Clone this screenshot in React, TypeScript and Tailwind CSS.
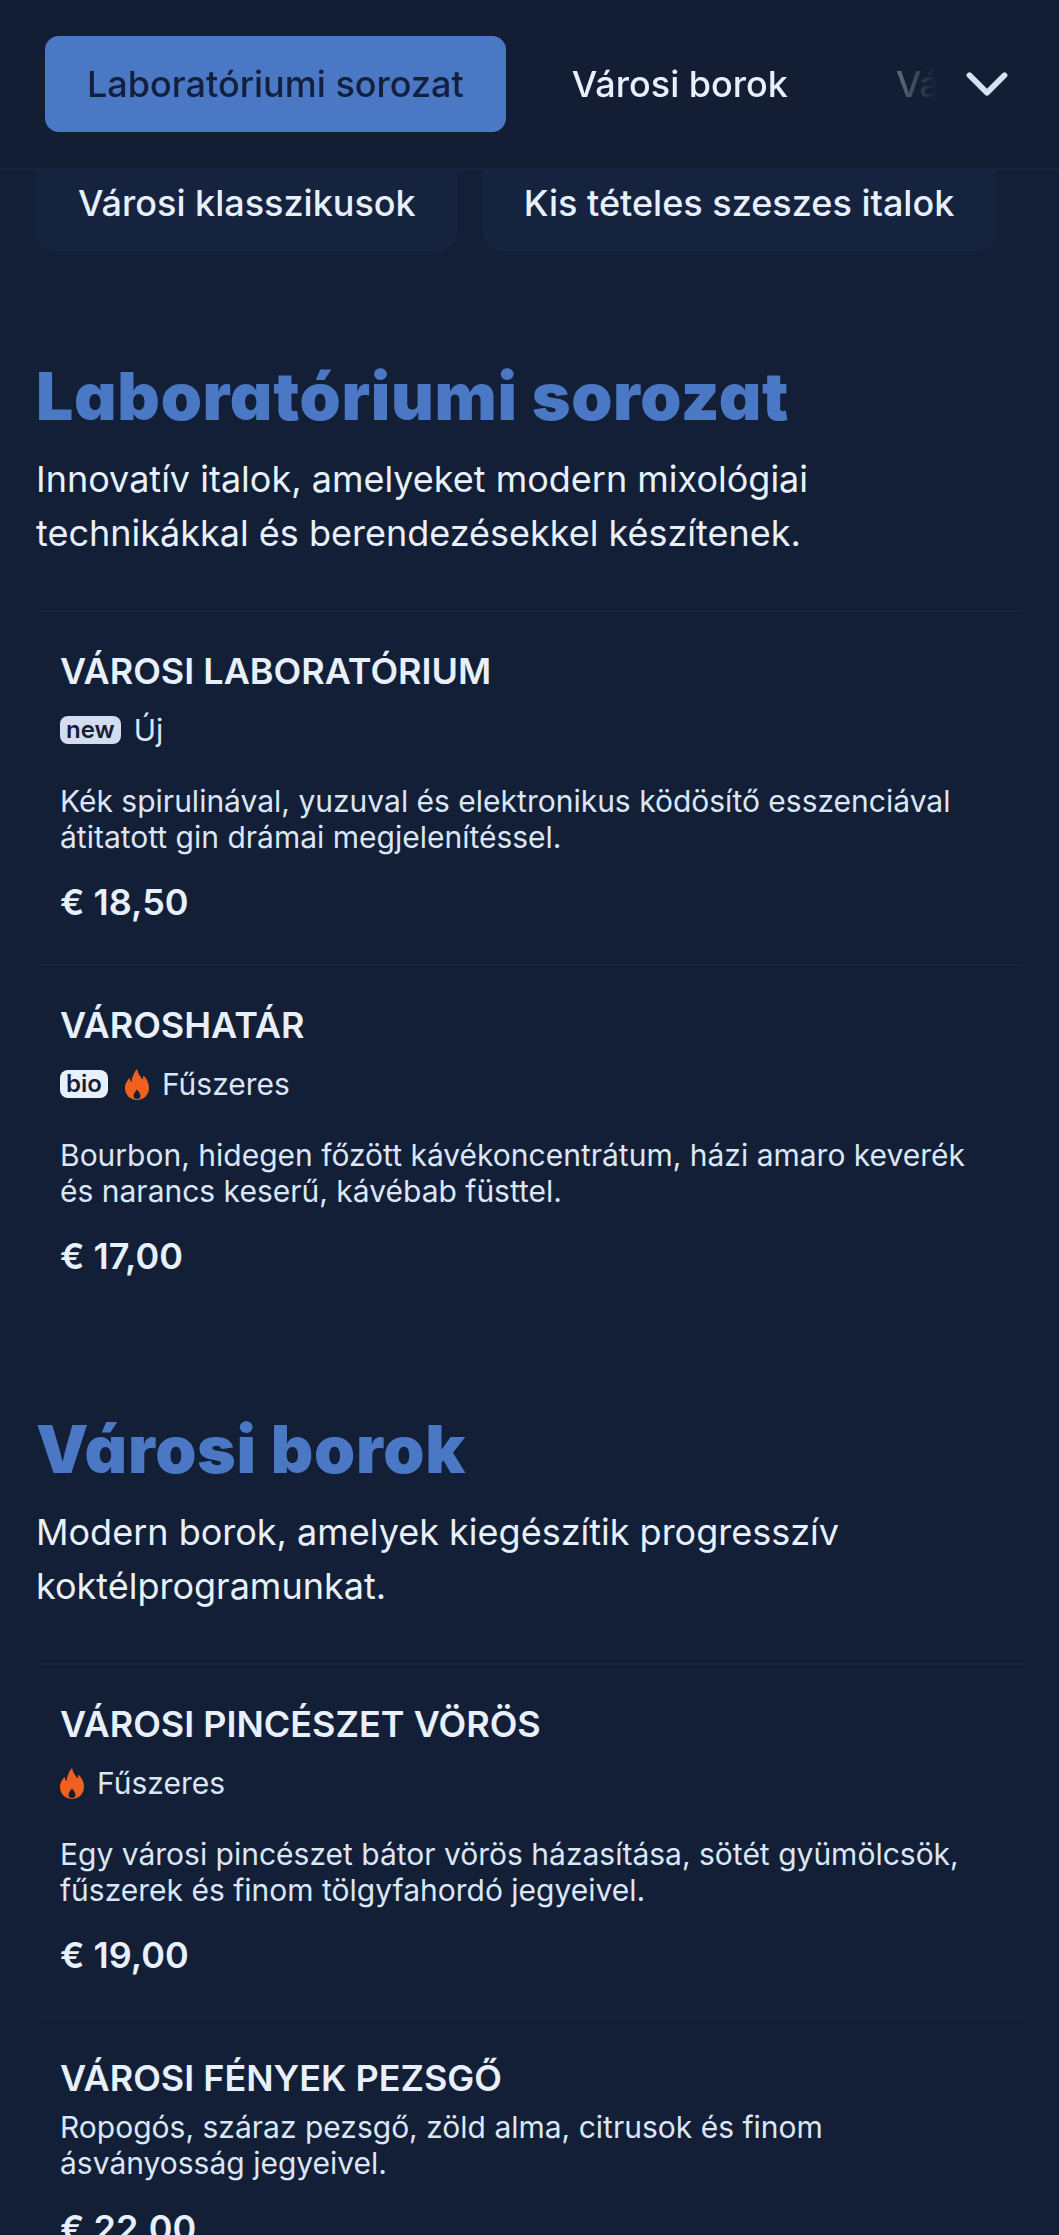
import React from 'react';
import { ChevronDown } from 'lucide-react';

type Item = {
  name: string;
  badge?: 'new' | 'bio';
  spicy?: boolean;
  label?: string;
  desc: string[];
  price: string;
};

const sections: { title: string; lead: string[]; items: Item[] }[] = [
  {
    title: 'Laboratóriumi sorozat',
    lead: ['Innovatív italok, amelyeket modern mixológiai', 'technikákkal és berendezésekkel készítenek.'],
    items: [
      {
        name: 'VÁROSI LABORATÓRIUM',
        badge: 'new',
        label: 'Új',
        desc: ['Kék spirulinával, yuzuval és elektronikus ködösítő esszenciával', 'átitatott gin drámai megjelenítéssel.'],
        price: '€ 18,50',
      },
      {
        name: 'VÁROSHATÁR',
        badge: 'bio',
        spicy: true,
        label: 'Fűszeres',
        desc: ['Bourbon, hidegen főzött kávékoncentrátum, házi amaro keverék', 'és narancs keserű, kávébab füsttel.'],
        price: '€ 17,00',
      },
    ],
  },
  {
    title: 'Városi borok',
    lead: ['Modern borok, amelyek kiegészítik progresszív', 'koktélprogramunkat.'],
    items: [
      {
        name: 'VÁROSI PINCÉSZET VÖRÖS',
        spicy: true,
        label: 'Fűszeres',
        desc: ['Egy városi pincészet bátor vörös házasítása, sötét gyümölcsök,', 'fűszerek és finom tölgyfahordó jegyeivel.'],
        price: '€ 19,00',
      },
      {
        name: 'VÁROSI FÉNYEK PEZSGŐ',
        desc: ['Ropogós, száraz pezsgő, zöld alma, citrusok és finom', 'ásványosság jegyeivel.'],
        price: '€ 22,00',
      },
    ],
  },
];

const Flame = ({ className }: { className?: string }) => (
  <svg viewBox="0 0 24 31" className={`h-[31px] w-6 shrink-0 ${className ?? ''}`} fill="#f0601e" fillRule="evenodd">
    <path d="M12 0C13 5 16 8 17.5 10.5C18 9 18.5 7.5 18.5 6.5C22 10 24 14 24 19C24 26 18.5 31 12 31C5.5 31 0 26 0 19C0 15 2 11.5 4.5 9C5 11 5.5 12 6.5 13C7 8 9 3.5 12 0ZM12 20.5C10 23 8.5 25 8.5 27C8.5 29 10 30 12 30C14 30 15.5 29 15.5 27C15.5 25 14 23 12 20.5Z" />
  </svg>
);

const MenuItem = ({ item }: { item: Item }) => {
  const hasTags = item.badge || item.label;
  return (
    <div className="border-t-2 border-[#18243d] px-6 pt-[37px] pb-10">
      <h3 className="text-[36px] leading-[44px] font-semibold text-[#e8f0fc]">{item.name}</h3>
      {hasTags && (
        <div className="mt-[17px] mb-[33px] flex h-10 items-center gap-[13px] text-[30px] text-[#dbe6f7]">
          {item.badge && (
            <span
              className={`flex h-[28px] items-center rounded-[8px] px-[6px] text-[24px] leading-none font-semibold text-[#131f36] ${
                item.badge === 'new' ? 'bg-[#d3dded]' : 'bg-[#e8f0fc]'
              }`}
            >
              {item.badge}
            </span>
          )}
          {item.spicy && <Flame className={item.badge ? 'ml-1' : ''} />}
          {item.label && <span>{item.label}</span>}
        </div>
      )}
      <p className={`text-[30px] leading-[36px] text-[#dbe6f7] ${hasTags ? '' : 'mt-[9px]'}`}>
        {item.desc.map((line) => (
          <span key={line} className="block whitespace-nowrap">
            {line}
          </span>
        ))}
      </p>
      <div className="mt-[25px] text-[36px] leading-[44px] font-semibold text-[#e8f0fc]">{item.price}</div>
    </div>
  );
};

export default function App() {
  return (
    <div className="h-[2235px] overflow-hidden bg-[#131f36] font-['Inter',sans-serif]">
      {/* sticky category bar */}
      <header className="sticky top-0 z-10 flex h-[170px] items-center border-b-2 border-[#18243d] bg-[#131e35] pr-[37px] pl-[45px]">
        <div className="flex flex-1 gap-6 overflow-hidden text-[36px] font-medium text-[#e8f0fc] [mask-image:linear-gradient(to_right,black_88%,transparent_100%)]">
          <button className="h-24 shrink-0 rounded-[14px] bg-[#4a78c4] px-[42px] text-[#131f3c]">Laboratóriumi sorozat</button>
          <button className="h-24 shrink-0 px-[42px]">Városi borok</button>
          <button className="h-24 shrink-0 px-[42px]">Városi klasszikusok</button>
        </div>
        <ChevronDown className="ml-[15px] text-[#d5e1f5]" size={70} strokeWidth={2} />
      </header>

      <div className="mt-[-15px] flex gap-6 px-9 text-[36px] font-medium text-[#e8f0fc]">
        <div className="flex h-24 items-center rounded-[20px] bg-[#16233f] px-[42px]">Városi klasszikusok</div>
        <div className="flex h-24 items-center rounded-[20px] bg-[#16233f] px-[42px]">Kis tételes szeszes italok</div>
      </div>

      <main className="px-9">
        {sections.map((s, i) => (
          <section key={s.title} className={i === 0 ? 'mt-[105px]' : 'mt-[91px]'}>
            <h2 className="text-[66px] leading-[80px] font-black tracking-[0.7px] text-[#4a78c4] [font-feature-settings:'cv11']">{s.title}</h2>
            <p className="mt-4 mb-[50px] text-[36px] leading-[54px] text-[#e8f0fc]">
              {s.lead.map((line) => (
                <span key={line} className="block whitespace-nowrap">
                  {line}
                </span>
              ))}
            </p>
            {s.items.map((item) => (
              <MenuItem key={item.name} item={item} />
            ))}
          </section>
        ))}
      </main>
    </div>
  );
}
